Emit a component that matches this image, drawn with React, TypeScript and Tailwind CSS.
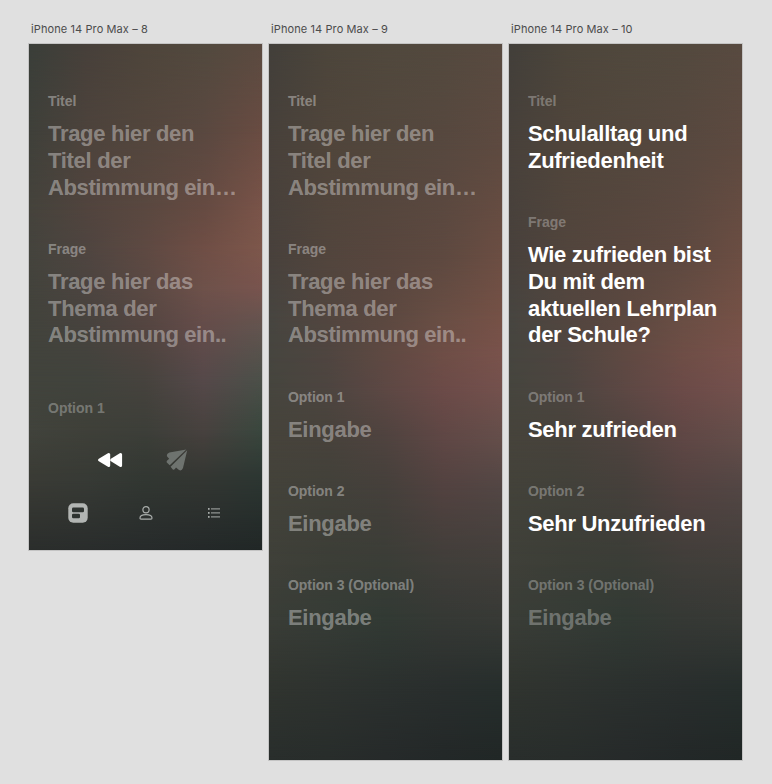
type Mesh = { at: number; colors: string[] }[];

const shortMesh: Mesh = [
  { at: 0, colors: ['#3a3e39', '#47403a', '#4e453b', '#52493e', '#5a4a40'] },
  { at: 18, colors: ['#3f403a', '#4d433c', '#53463d', '#5a4840', '#6a4c42'] },
  { at: 33, colors: ['#45433c', '#51443e', '#5a4840', '#664b42', '#7a5449'] },
  { at: 40, colors: ['#44433d', '#4f4540', '#5e4942', '#6f4e45', '#7d574b'] },
  { at: 48, colors: ['#43433c', '#4c4440', '#5a4943', '#6e514a', '#79544e'] },
  { at: 56, colors: ['#42433c', '#47433e', '#544541', '#644c4a', '#62544f'] },
  { at: 66, colors: ['#41433c', '#41433d', '#47433e', '#56494a', '#4c5049'] },
  { at: 76, colors: ['#41433c', '#3f4039', '#3d3f39', '#48423f', '#3a473e'] },
  { at: 86, colors: ['#3a3b35', '#373a35', '#323732', '#333632', '#2c3632'] },
  { at: 100, colors: ['#2b2e2c', '#2a2d2c', '#272b2b', '#242929', '#212726'] },
];

const tallMesh: Mesh = [
  { at: 0, colors: ['#423f3a', '#4c453b', '#50483d', '#53493e', '#584a40'] },
  { at: 15, colors: ['#48413b', '#50453b', '#53473d', '#57483f', '#5e4a40'] },
  { at: 30, colors: ['#48413c', '#52453d', '#58463e', '#5e4940', '#6c4e43'] },
  { at: 38, colors: ['#474540', '#52463f', '#5b4840', '#694e44', '#755146'] },
  { at: 43, colors: ['#46453f', '#4f4540', '#5f4942', '#6e4e46', '#79524b'] },
  { at: 48, colors: ['#46453e', '#4d4540', '#5d4844', '#6c4b48', '#74514d'] },
  { at: 55, colors: ['#46433b', '#47423b', '#4f433f', '#5f4745', '#644e4a'] },
  { at: 62, colors: ['#43423a', '#42413a', '#45403b', '#524240', '#524644'] },
  { at: 72, colors: ['#3f4039', '#3c3e37', '#3b3d37', '#413e3a', '#433f3b'] },
  { at: 80, colors: ['#3a3d37', '#363c36', '#323a34', '#363935', '#383a36'] },
  { at: 90, colors: ['#30342f', '#2e322f', '#2b302e', '#292e2d', '#262e2c'] },
  { at: 100, colors: ['#292e2c', '#282d2b', '#262a2a', '#232828', '#212726'] },
];

/* Gradient mesh: each row of colours fades into the row beneath it. */
function Backdrop({ mesh }: { mesh: Mesh }) {
  return (
    <div className="absolute inset-0 -z-10 overflow-hidden">
      {[...mesh].reverse().map((row, i, rows) => {
        const mask = i === 0 ? undefined : `linear-gradient(to bottom, #000 ${row.at}%, transparent ${rows[i - 1].at}%)`;
        return (
          <div
            key={row.at}
            className="absolute inset-0"
            style={{ backgroundImage: `linear-gradient(to right, ${row.colors.join(', ')})`, maskImage: mask }}
          />
        );
      })}
    </div>
  );
}

function Field({ label, lines, filled = false, dim = false }: { label: string; lines: string[]; filled?: boolean; dim?: boolean }) {
  return (
    <div className="mb-[39.5px]">
      <div className={`mb-[11px] h-[17px] text-[14px] leading-[17px] tracking-[-0.04px] ${dim ? 'text-white/30' : 'text-white/37'}`}>{label}</div>
      {lines.map((line) => (
        <div
          key={line}
          className={`h-[26.75px] text-[22px] leading-[26.75px] whitespace-nowrap ${line.startsWith('Abstimmung') ? 'tracking-[-0.39px]' : 'tracking-[-0.3px]'} ${filled ? 'text-white' : dim ? 'text-white/30' : 'text-white/37'}`}
        >
          {line}
        </div>
      ))}
    </div>
  );
}

function Frame({ name, mesh, size, children }: { name: string; mesh: Mesh; size: string; children: React.ReactNode }) {
  return (
    <section className="w-[235px]">
      <h2 className="h-[21px] pl-[3px] font-['Inter',sans-serif] text-[11px] leading-[14px] font-normal tracking-[0.1px] text-[#4c4c4c]">{name}</h2>
      <div className={`relative isolate overflow-hidden border border-[#c4c4c4] pt-[49px] pl-[19px] ${size}`}>
        <Backdrop mesh={mesh} />
        {children}
      </div>
    </section>
  );
}

const titleHint = ['Trage hier den', 'Titel der', 'Abstimmung ein…'];
const questionHint = ['Trage hier das', 'Thema der', 'Abstimmung ein..'];

function Controls() {
  return (
    <div className="-ml-[19px]">
      <div className="flex h-[24px] items-center pl-[69px]">
        <svg width="25" height="16" viewBox="0 0 25 16" fill="#fff" stroke="#fff" strokeWidth="3" strokeLinejoin="round">
          <path d="M1.6 8 10.7 2.5V13.5Z" />
          <path d="M13.7 8 22.6 2.5V13.5Z" />
        </svg>
        <svg className="ml-[43px]" width="22" height="22" viewBox="0 0 22 22" fill="#6e736f">
          <path d="M20.3.4 3.4 3.4Q-.2 5 1.3 7.8L3.2 9.7Q.1 11.8.6 13.2L3.7 16.3 20.3.4Z" />
          <path d="M21.2 1.3 4.6 17.8 6.8 20.5Q8.2 21.5 10 18.5L13 21Q15.7 22.4 17 19L21.2 1.3Z" />
        </svg>
      </div>
      <div className="mt-[30.5px] flex h-[20px] items-center pl-[39px]">
        <svg width="20" height="20" viewBox="0 0 20 20">
          <rect x=".3" y=".3" width="19.4" height="19.4" rx="5" fill="#b2b5b3" />
          <rect x="4" y="4.6" width="12" height="4.7" rx="1.2" fill="#2e3330" />
          <rect x="4" y="10.7" width="8" height="4.5" rx="1.2" fill="#2e3330" />
        </svg>
        <svg className="ml-[51px]" width="14" height="16" viewBox="0 0 14 16" fill="none" stroke="#a9adab" strokeWidth="1.2">
          <circle cx="7" cy="4.7" r="3.1" />
          <path d="M1 13.1Q1 9.7 7 9.7T13 13.1Q13 14.2 12 14.2H2Q1 14.2 1 13.1Z" />
        </svg>
        <svg className="ml-[55px]" width="12" height="10" viewBox="0 0 12 10" fill="#a9adab">
          <rect x="0" y="0" width="1.6" height="1.8" /><rect x="3" y=".4" width="9.3" height="1" />
          <rect x="0" y="4" width="1.6" height="1.8" /><rect x="3" y="4.4" width="9.3" height="1" />
          <rect x="0" y="8" width="1.6" height="1.8" /><rect x="3" y="8.4" width="9.3" height="1" />
        </svg>
      </div>
    </div>
  );
}

export default function App() {
  return (
    <main className="flex h-[784px] w-[772px] items-start gap-[5px] overflow-hidden bg-[#e0e0e0] pt-[22px] pl-[28px] font-['Liberation_Sans',sans-serif] font-bold">
      <Frame name="iPhone 14 Pro Max – 8" mesh={shortMesh} size="h-[508px]">
        <Field label="Titel" lines={titleHint} />
        <Field label="Frage" lines={questionHint} />
        <div className="mt-[51px] h-[48px] text-[14px] leading-[17px] text-white/30">Option 1</div>
        <Controls />
      </Frame>
      <Frame name="iPhone 14 Pro Max – 9" mesh={tallMesh} size="h-[718px]">
        <Field label="Titel" lines={titleHint} />
        <Field label="Frage" lines={questionHint} />
        <Field label="Option 1" lines={['Eingabe']} />
        <Field label="Option 2" lines={['Eingabe']} />
        <Field label="Option 3 (Optional)" lines={['Eingabe']} />
      </Frame>
      <Frame name="iPhone 14 Pro Max – 10" mesh={tallMesh} size="h-[718px]">
        <Field label="Titel" lines={['Schulalltag und', 'Zufriedenheit']} dim filled />
        <Field label="Frage" lines={['Wie zufrieden bist', 'Du mit dem', 'aktuellen Lehrplan', 'der Schule?']} dim filled />
        <Field label="Option 1" lines={['Sehr zufrieden']} dim filled />
        <Field label="Option 2" lines={['Sehr Unzufrieden']} dim filled />
        <Field label="Option 3 (Optional)" lines={['Eingabe']} dim />
      </Frame>
    </main>
  );
}
